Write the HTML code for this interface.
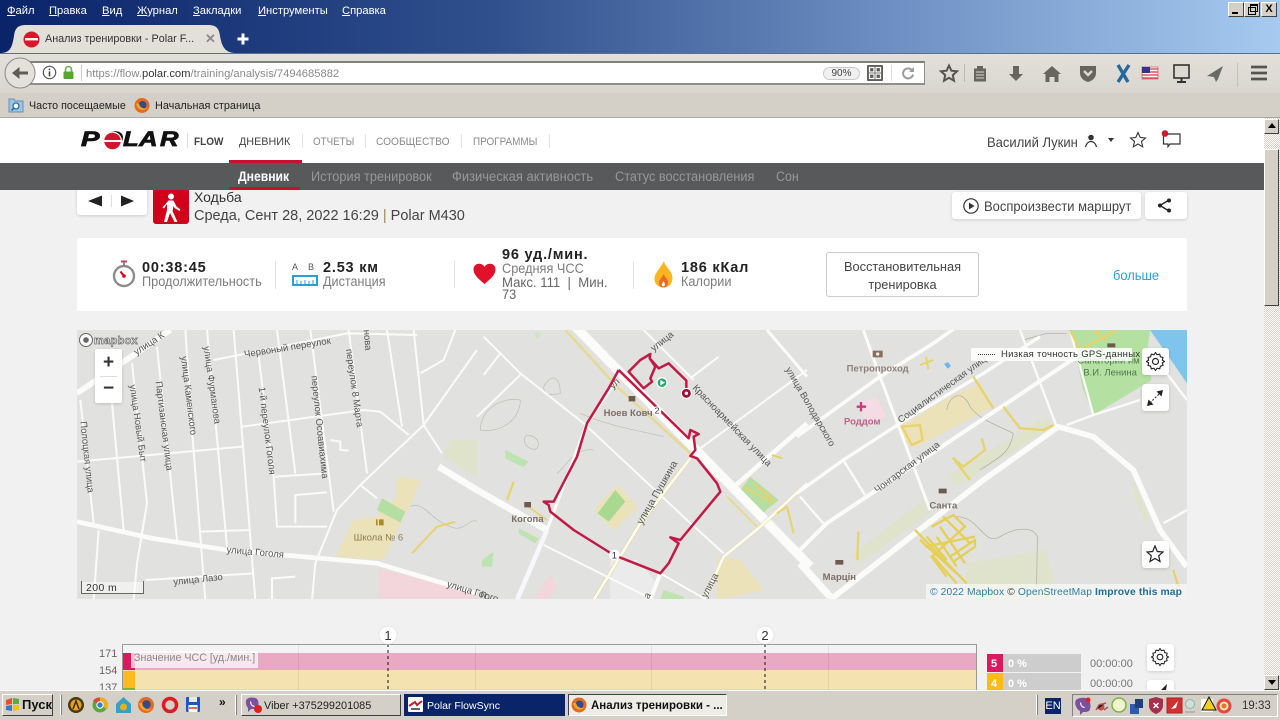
<!DOCTYPE html>
<html lang="ru"><head><meta charset="utf-8"><title>Анализ тренировки - Polar Flow</title>
<style>
html,body{margin:0;padding:0;width:1280px;height:720px;overflow:hidden;background:#f1f1f1;font-family:"Liberation Sans","DejaVu Sans",sans-serif}
.a{position:absolute;white-space:nowrap}
.box{position:absolute}
svg{position:absolute;overflow:hidden}
.card{position:absolute;background:#fff;box-shadow:0 1px 3px rgba(0,0,0,.15);border-radius:3px}
.menu{top:4px;font-size:11.2px;color:#fff;line-height:15px}
.menu u{text-decoration:underline}
.nav1{font-size:11px;color:#8a8a8a;top:136px;line-height:13px;transform-origin:0 0;transform:scaleX(.91)}
.nav2{font-size:13.5px;color:#96989a;top:168px;line-height:17px;transform-origin:0 0;transform:scaleX(.945)}
.lab{font-size:14px;color:#7d7d7d;line-height:14px;transform-origin:0 0;transform:scaleX(.91)}
.val{font-size:14.5px;font-weight:bold;color:#222;line-height:15px;letter-spacing:.8px}
.sep{position:absolute;width:1px;background:#e2e2e2}
.win{position:absolute;top:2px;width:14px;height:13px;background:#d4d0c8;border:1px solid;border-color:#fff #404040 #404040 #fff;box-sizing:content-box}
.sb{position:absolute;left:1264px;width:15px;background:#d4d0c8;border:1px solid;border-color:#fff #404040 #404040 #fff;box-sizing:border-box}
.tb{position:absolute;top:694px;height:22px;box-sizing:border-box;font-size:12px;line-height:20px;padding-top:1px;border:1px solid;white-space:nowrap;overflow:hidden}
.pl{position:absolute;top:127px;font:italic bold 21px/26px "Liberation Sans";color:#111;-webkit-text-stroke:.8px #111;transform-origin:0 50%;transform:scaleX(1.22)}
text{font-family:"Liberation Sans","DejaVu Sans",sans-serif}
</style></head><body>

<!-- Browser title bar -->
<div class="box" style="left:0;top:0;width:1280px;height:53px;background:linear-gradient(90deg,#0a246a 0%,#2f4f8c 38%,#6a8cc0 68%,#a6caf0 100%)"></div>
<div class="a menu" style="left:7px"><u>Ф</u>айл</div>
<div class="a menu" style="left:49px"><u>П</u>равка</div>
<div class="a menu" style="left:102px"><u>В</u>ид</div>
<div class="a menu" style="left:137px"><u>Ж</u>урнал</div>
<div class="a menu" style="left:193px"><u>З</u>акладки</div>
<div class="a menu" style="left:258px"><u>И</u>нструменты</div>
<div class="a menu" style="left:342px"><u>С</u>правка</div>
<div class="win" style="left:1228px"><div class="box" style="left:3px;top:9px;width:6px;height:2px;background:#000"></div></div>
<div class="win" style="left:1244px"><div class="box" style="left:3px;top:4px;width:6px;height:6px;border:1px solid #000"></div><div class="box" style="left:5px;top:1px;width:6px;height:5px;border:1px solid #000;border-top-width:2px"></div></div>
<div class="win" style="left:1261px;font:bold 11px/13px 'Liberation Sans';text-align:center">X</div>

<!-- Tab -->
<svg style="left:0;top:24px" width="240" height="30" viewBox="0 0 240 30"><path d="M0 29C10 29 12 24 14 12 15 4 18 1 26 1H208C216 1 219 4 220 12 222 24 226 29 236 29Z" fill="#e3e0d9"/></svg>
<svg style="left:23px;top:31px" width="17" height="17" viewBox="0 0 17 17"><circle cx="8.5" cy="8.5" r="8" fill="#d7182a"/><rect x="2" y="7" width="13" height="2.4" fill="#fff"/></svg>
<div class="a" style="left:45px;top:32px;font-size:10.8px;color:#333;line-height:15px">Анализ тренировки - Polar F...</div>
<div class="a" style="left:205px;top:31px;font:bold 13px/16px 'Liberation Sans';color:#8b8b8b">✕</div>
<svg style="left:236px;top:32px" width="14" height="14" viewBox="0 0 14 14"><path d="M7 1.500V12.500M1.500 7H12.500" stroke="#fff" stroke-width="3"/></svg>

<!-- Toolbar -->
<div class="box" style="left:0;top:53px;width:1280px;height:40px;background:linear-gradient(#e3e0d9,#d9d6cf);border-top:1px solid #5f6f8b;box-sizing:border-box"></div>
<div class="box" style="left:0;top:93px;width:1280px;height:25px;background:#d4d0c8;border-bottom:1px solid #a8a8a6;box-sizing:border-box"></div>
<div class="box" style="left:28px;top:61px;width:897px;height:24px;background:#fff;border:1px solid #8f8f8f;border-top:2px solid #7f7f7f;border-bottom:2px solid #8f8f8f;box-sizing:border-box"></div>
<svg style="left:4px;top:57px" width="32" height="32" viewBox="0 0 32 32"><circle cx="16" cy="16" r="15" fill="#e4e1da" stroke="#8a8a88"/><path d="M24 14.500H15.500V10L8 16 15.500 22V17.500H24Z" fill="#5c5c58"/></svg>
<svg style="left:42px;top:65px" width="15" height="15" viewBox="0 0 15 15"><circle cx="7.5" cy="7.5" r="6.2" fill="#fff" stroke="#555" stroke-width="1.2"/><rect x="6.7" y="6.4" width="1.6" height="5" fill="#444"/><rect x="6.7" y="3.6" width="1.6" height="1.6" fill="#444"/></svg>
<svg style="left:62px;top:65px" width="13" height="15" viewBox="0 0 13 15"><path d="M3.500 7V4.500a3 3 0 0 1 6 0V7" fill="none" stroke="#6ab04c" stroke-width="1.6"/><rect x="1.500" y="6.500" width="10" height="7.500" rx="1" fill="#58a532"/></svg>
<div class="box" style="left:81px;top:65px;width:1px;height:16px;background:#ccc"></div>
<div class="a" style="left:86px;top:67px;font-size:11.2px;line-height:14px;color:#8a8a8a">https://flow.<span style="color:#333">polar.com</span>/training/analysis/7494685882</div>
<div class="a" style="left:823px;top:67px;width:37px;height:13px;border:1px solid #c8c8c8;border-radius:7px;background:#f0f0f0;box-sizing:border-box;font-size:10px;line-height:11px;text-align:center;color:#444">90%</div>
<svg style="left:867px;top:65px" width="16" height="16" viewBox="0 0 16 16"><rect width="16" height="16" rx="1" fill="#5e5e5a"/><rect x="2.500" y="2.500" width="4.500" height="4.500" fill="none" stroke="#fff" stroke-width="1.2"/><rect x="9" y="2.500" width="4.500" height="4.500" fill="none" stroke="#fff" stroke-width="1.2"/><rect x="2.500" y="9" width="4.500" height="4.500" fill="none" stroke="#fff" stroke-width="1.2"/><rect x="9" y="9" width="4.500" height="4.500" fill="none" stroke="#fff" stroke-width="1.2"/></svg>
<div class="box" style="left:891px;top:65px;width:1px;height:16px;background:#ddd"></div>
<svg style="left:901px;top:66px" width="14" height="14" viewBox="0 0 14 14"><path d="M11.500 5A5 5 0 1 0 12 8.500" fill="none" stroke="#9b9b9b" stroke-width="2"/><path d="M13 1V6H8Z" fill="#9b9b9b"/></svg>

<svg style="left:0;top:53px" width="1280" height="40" viewBox="0 53 1280 40">
<path d="M949 65.500l2.400 5.200 5.600.6-4.200 3.800 1.200 5.600-5-2.900-5 2.900 1.200-5.600-4.200-3.800 5.600-.6Z" fill="#dcd9d2" stroke="#55554f" stroke-width="2"/>
<rect x="964" y="64" width="1" height="18" fill="#bdbab3"/>
<path d="M974 68.500h3v-2.500h6v2.500h3v13h-12Z" fill="#66665f"/><path d="M976 72h8M976 75h8M976 78h8" stroke="#dcd9d2" stroke-width="1"/>
<path d="M1013 66h6v8h4l-7 7-7-7h4Z" fill="#66665f"/>
<path d="M1052 66l-9 8h2.500v8h4v-5h5v5h4v-8h2.500Z" fill="#66665f"/>
<path d="M1080 66h16v7c0 5-4 8-8 9-4-1-8-4-8-9Z" fill="#66665f"/><path d="M1084 71l4 4 4-4" fill="none" stroke="#dcd9d2" stroke-width="2.400"/>
<path d="M1118 65l10 17M1129 65l-11 17" stroke="#23689f" stroke-width="3.400"/>
<rect x="1142" y="67" width="16" height="12" fill="#fff" stroke="#b88"/><path d="M1142 69h16M1142 72h16M1142 75h16M1142 78h16" stroke="#d34" stroke-width="1.200"/><rect x="1142" y="67" width="8" height="6" fill="#338"/>
<rect x="1174" y="65" width="15" height="13" fill="#dcd9d2" stroke="#333" stroke-width="1.600"/><path d="M1181.500 78v3M1177 82h9" stroke="#333" stroke-width="2"/>
<path d="M1223 66l-16 10 7 1 2 5 2-3Z" fill="#6a6a64"/>
<rect x="1237" y="63" width="1" height="24" fill="#c4c1ba"/>
<path d="M1251 67h16M1251 73h16M1251 79h16" stroke="#55554f" stroke-width="2.800"/>
</svg>

<!-- Bookmarks -->
<svg style="left:8px;top:97px" width="16" height="16" viewBox="0 0 16 16"><path d="M1 2h5l1 2h8v11H1Z" fill="#9cc4e4" stroke="#6a8fb0"/><circle cx="8" cy="9" r="3" fill="#fff" stroke="#2c6ea8" stroke-width="1.300"/><path d="M6 11l-2.500 2.500" stroke="#2c6ea8" stroke-width="1.600"/></svg>
<div class="a" style="left:29px;top:99px;font-size:10.7px;line-height:14px;color:#222">Часто посещаемые</div>
<svg style="left:134px;top:97px" width="16" height="17" viewBox="0 0 16 16"><circle cx="8" cy="8" r="7.500" fill="#e66a1f"/><circle cx="8.500" cy="7.500" r="4" fill="#2f4d8f"/><path d="M2 6C3 12 9 15 14 10 11 12 6 11 5 6Z" fill="#f8a526"/></svg>
<div class="a" style="left:155px;top:99px;font-size:10.9px;line-height:14px;color:#222">Начальная страница</div>

<!-- Polar header -->
<div class="box" style="left:0;top:118px;width:1264px;height:45px;background:#fff"></div>
<div class="pl" style="left:81px;transform:scaleX(1.32)">P</div>
<div class="pl" style="left:103px">O</div>
<div class="pl" style="left:123px">L</div>
<div class="pl" style="left:139px">A</div>
<div class="pl" style="left:160px">R</div>
<svg style="left:102px;top:131px" width="21" height="20" viewBox="0 0 21 20"><circle cx="10.500" cy="10" r="9.500" fill="#fff"/><circle cx="10.500" cy="10" r="8.300" fill="#d4142a"/><rect x="1" y="9" width="19" height="2" fill="#fff"/></svg>
<div class="box" style="left:187px;top:133px;width:1px;height:15px;background:#ddd"></div>
<div class="a" style="left:194px;top:136px;font-size:11px;font-weight:bold;color:#444;line-height:13px;transform-origin:0 0;transform:scaleX(.91)">FLOW</div>
<div class="a nav1" style="left:239px;color:#444;transform:scaleX(.98)">ДНЕВНИК</div>
<div class="a nav1" style="left:313px;transform:scaleX(.89)">ОТЧЕТЫ</div>
<div class="a nav1" style="left:376px;transform:scaleX(.925)">СООБЩЕСТВО</div>
<div class="a nav1" style="left:473px;transform:scaleX(.9)">ПРОГРАММЫ</div>
<div class="sep" style="left:302px;top:134px;height:14px"></div><div class="sep" style="left:365px;top:134px;height:14px"></div><div class="sep" style="left:461px;top:134px;height:14px"></div><div class="sep" style="left:549px;top:134px;height:14px"></div>
<div class="box" style="left:229px;top:160px;width:73px;height:3px;background:#c8102e"></div>
<div class="a" style="left:987px;top:135px;font-size:14px;color:#444;line-height:15px;transform-origin:0 0;transform:scaleX(.93)">Василий Лукин</div>
<svg style="left:1084px;top:134px" width="40" height="14" viewBox="0 0 40 14"><circle cx="7" cy="3.500" r="2.800" fill="#333"/><path d="M1.500 13C2.500 9 5 7.500 7 7.500S11.500 9 12.500 13" fill="none" stroke="#333" stroke-width="1.200"/><path d="M24 4h6l-3 4Z" fill="#333"/></svg>
<svg style="left:1129px;top:131px" width="18" height="17" viewBox="0 0 18 17"><path d="M9 1.500l2.200 5 5.300.5-4 3.500 1.200 5.300L9 13l-4.700 2.800 1.200-5.300-4-3.500 5.300-.5Z" fill="none" stroke="#333" stroke-width="1.100"/></svg>
<svg style="left:1160px;top:129px" width="22" height="20" viewBox="0 0 22 20"><path d="M3.500 5H20V15H10L8 17.500V15H3.500Z" fill="none" stroke="#333" stroke-width="1.200"/><circle cx="5" cy="4.500" r="3.300" fill="#d4142a"/></svg>

<!-- Activity header -->
<div class="card" style="left:77px;top:184px;width:70px;height:31px"></div>
<!-- Sub nav -->
<div class="box" style="left:0;top:163px;width:1264px;height:27px;background:#58595b"></div>
<div class="box" style="left:229px;top:187px;width:71px;height:3px;background:#c8102e"></div>
<div class="a nav2" style="left:238px;color:#fff;font-weight:bold;transform:scaleX(.9)">Дневник</div>
<div class="a nav2" style="left:311px">История тренировок</div>
<div class="a nav2" style="left:452px;transform:scaleX(.96)">Физическая активность</div>
<div class="a nav2" style="left:615px">Статус восстановления</div>
<div class="a nav2" style="left:776px;transform:scaleX(.92)">Сон</div>

<svg style="left:87px;top:194px" width="52" height="14" viewBox="0 0 52 14"><path d="M1 7L15 1.500V12.500Z" fill="#222"/><path d="M47 7L34 1.500V12.500Z" fill="#222"/><rect x="24" y="1" width="1" height="12" fill="#ddd"/></svg>
<svg style="left:153px;top:190px" width="36" height="34" viewBox="0 0 36 34"><path d="M0 0H36V31a3 3 0 0 1-3 3H3a3 3 0 0 1-3-3Z" fill="#d0021b"/><circle cx="18" cy="6.500" r="3" fill="#fff"/><path d="M15.500 10.500h5l3 6 4 3-1 1.500-5-3-1-2-1 5 5 11h-3l-4.500-9-3 9h-3l3-12V14l-3 4.500-1.500-1Z" fill="#fff"/></svg>
<div class="a" style="left:194px;top:190px;font-size:14px;line-height:15px;color:#333">Ходьба</div>
<div class="a" style="left:194px;top:208px;font-size:14.500px;line-height:16px;color:#444">Среда, Сент 28, 2022 16:29 <span style="color:#a08a50">|</span> Polar M430</div>
<div class="card" style="left:952px;top:192px;width:189px;height:27px"></div>
<div class="card" style="left:1145px;top:192px;width:42px;height:27px"></div>
<svg style="left:962px;top:197px" width="18" height="18" viewBox="0 0 18 18"><circle cx="9" cy="9" r="7.200" fill="none" stroke="#333" stroke-width="1.200"/><path d="M7 5.500L12.500 9 7 12.500Z" fill="#333"/></svg>
<div class="a" style="left:984px;top:199px;font-size:13.500px;line-height:16px;color:#444;transform-origin:0 0;transform:scaleX(.96)">Воспроизвести маршрут</div>
<svg style="left:1157px;top:198px" width="15" height="15" viewBox="0 0 15 15"><path d="M12 2L3 7.500 12 13" fill="none" stroke="#222" stroke-width="1.400"/><circle cx="12" cy="2.500" r="2" fill="#222"/><circle cx="3" cy="7.500" r="2" fill="#222"/><circle cx="12" cy="12.500" r="2" fill="#222"/></svg>

<!-- Stats -->
<div class="box" style="left:77px;top:238px;width:1110px;height:73px;background:#fff"></div>
<svg style="left:112px;top:260px" width="24" height="28" viewBox="0 0 24 28"><path d="M9 1.500h6" stroke="#d23c4e" stroke-width="2"/><path d="M12 2v3" stroke="#888" stroke-width="2"/><circle cx="12" cy="16" r="10" fill="#fff" stroke="#8c8c8c" stroke-width="2.400"/><path d="M12 16L8.500 11.500" stroke="#d0021b" stroke-width="2"/><circle cx="12" cy="16" r="1.800" fill="#d0021b"/></svg>
<div class="a val" style="left:142px;top:261px">00:38:45</div>
<div class="a lab" style="left:142px;top:274px">Продолжительность</div>
<div class="sep" style="left:275px;top:261px;height:28px"></div>
<div class="a" style="left:292px;top:262px;font-size:9px;line-height:11px;color:#555;word-spacing:8px">A B</div>
<svg style="left:292px;top:275px" width="26" height="12" viewBox="0 0 26 12"><rect width="26" height="11" fill="#2a9fd6"/><rect x="2" y="2" width="22" height="7" fill="#fff"/><path d="M5 5v4M9 6v3M13 5v4M17 6v3M21 5v4" stroke="#2a9fd6"/></svg>
<div class="a val" style="left:323px;top:261px">2.53 км</div>
<div class="a lab" style="left:323px;top:274px;transform:scaleX(.9)">Дистанция</div>
<div class="sep" style="left:454px;top:260px;height:28px"></div>
<svg style="left:473px;top:263px" width="23" height="22" viewBox="0 0 23 22"><path d="M11.500 21C5 15.500 .5 11.500 .5 6.500 .5 3 3 .8 6 .8 8.500 .8 10.500 2 11.500 4 12.500 2 14.500 .8 17 .8 20 .8 22.500 3 22.500 6.500 22.500 11.500 18 15.500 11.500 21Z" fill="#e0112b"/></svg>
<div class="a val" style="left:502px;top:248px">96 уд./мин.</div>
<div class="a lab" style="left:502px;top:262px;line-height:13px">Средняя ЧСС</div>
<div class="a lab" style="left:502px;top:276px;line-height:13px;color:#666;transform:scaleX(.94)">Макс. 111&nbsp; | &nbsp;Мин.</div>
<div class="a lab" style="left:502px;top:288px;line-height:13px;color:#666">73</div>
<div class="sep" style="left:633px;top:261px;height:28px"></div>
<svg style="left:654px;top:261px" width="19" height="27" viewBox="0 0 19 27"><path d="M10 0C11 6 19 10 18.500 18 18 23.500 14 26.500 9.500 26.500 4.500 26.500.5 23 .5 18 .5 12 6 8 10 0Z" fill="#fbb520"/><path d="M9.500 13C11 17 14.500 18 14 22 13.500 25 11.500 26.500 9.500 26.500 7 26.500 5 25 5 22 5 18.500 8 17 9.500 13Z" fill="#ea6a2a"/><path d="M9.500 20C10.500 22 11.500 23 10.500 25 9 26 7.500 25 7.800 23.500 8 22 9 21.500 9.500 20Z" fill="#fff"/></svg>
<div class="a val" style="left:681px;top:261px">186 кКал</div>
<div class="a lab" style="left:681px;top:274px">Калории</div>
<div class="box" style="left:826px;top:252px;width:153px;height:45px;border:1px solid #ccc;border-radius:3px;box-sizing:border-box;background:#fff"></div>
<div class="a" style="left:826px;top:258px;width:153px;font-size:12.800px;line-height:18px;color:#444;text-align:center;white-space:normal">Восстановительная<br>тренировка</div>
<div class="a" style="left:1113px;top:268px;font-size:14px;line-height:15px;color:#2a9fd6;transform-origin:0 0;transform:scaleX(.92)">больше</div>

<!-- Map -->
<svg style="left:77px;top:330px" width="1110" height="269" viewBox="77 330 1110 269">
<rect x="77" y="330" width="1110" height="269" fill="#e1e1df"/>
<!-- z5: left part -->
<g transform="translate(77 330) scale(.33333)" fill="none" stroke="#fbfbfa" stroke-width="6" stroke-linejoin="round">
<path d="M960 440L1030 450 1000 530 985 550 920 690 775 680 830 570 900 560 960 500Z" fill="#ebe2ba" stroke="none"/>
<path d="M915 505L985 545 970 578 900 540Z" fill="#b5dea3" stroke="none"/>
<path d="M905 715L1200 790V810H905Z" fill="#f3d5dc" stroke="none"/>
<path d="M1100 380L1200 440V330H1120Z" fill="#dfe3cc" stroke="none"/>
<path d="M1000 530C1040 510 1060 570 1120 590 1160 610 1180 560 1200 575" stroke="#bdbdb5" stroke-width="2"/>
<path d="M1005 670L1080 590 1135 575" stroke="#e8d26b" stroke-width="6"/>
<path d="M0 190L280 0" stroke-width="17"/>
<path d="M0 575L225 625 450 660 900 700 1200 790" stroke-width="14"/>
<path d="M410 90L810 10 1020 15"/><path d="M325 0L345 300 385 810"/><path d="M165 100L210 520 180 700 170 810"/><path d="M105 220L140 600"/><path d="M240 50L300 630"/><path d="M390 0L450 650"/><path d="M470 0L535 810"/><path d="M600 0L655 430"/><path d="M700 0L770 545"/><path d="M815 0L870 430"/><path d="M930 0L975 290"/><path d="M1010 0L1040 285 1095 370"/><path d="M0 395L495 350"/><path d="M495 290L860 240 910 245 995 315"/><path d="M545 80L590 440 600 590H750"/><path d="M595 440L750 430"/><path d="M655 580V495L750 487"/><path d="M760 330L790 335V360L815 362"/><path d="M1200 60L1040 285 850 465 780 540 715 700 705 810"/><path d="M850 465L900 505"/><path d="M370 605L520 600"/><path d="M65 600L50 810"/><path d="M205 750L530 730"/><path d="M585 810V745L655 740"/><path d="M10 210L50 580"/><path d="M1030 130L1100 90 1135 0"/>
<path d="M1085 410L1200 480" stroke-width="20"/>
<g stroke="none" fill="#555" font-size="28.500">
<text transform="translate(178 76) rotate(-33)">улица К</text>
<text transform="translate(503 82) rotate(-9)">Червоный переулок</text>
<text transform="translate(158 165) rotate(82)">улица Новый Быт</text>
<text transform="translate(236 155) rotate(83)">Партизанская улица</text>
<text transform="translate(312 80) rotate(83)">улица Каменского</text>
<text transform="translate(380 50) rotate(82)">улица Фурманова</text>
<text transform="translate(545 172) rotate(83)">1-й переулок Гоголя</text>
<text transform="translate(703 138) rotate(84)">переулок Осоавиахима</text>
<text transform="translate(807 58) rotate(82)">переулок 8 Марта</text>
<text transform="translate(860 0) rotate(85)">нова</text>
<text transform="translate(10 275) rotate(84)">Полоцкая улица</text>
<text transform="translate(448 668) rotate(5)">улица Гоголя</text>
<text transform="translate(290 765) rotate(-6)">улица Лазо</text>
<text transform="translate(1108 770) rotate(17)">улица Гог</text>
<text x="830" y="632" fill="#8a7c4d">Школа № 6</text>
</g>
<path d="M897 568h5v18h-5ZM906 568h14v18h-14Z" fill="#a98a2a" stroke="none"/>
</g>
<!-- z6: middle part -->
<g transform="translate(477 330) scale(.33333)" fill="none" stroke="#fbfbfa" stroke-width="6" stroke-linejoin="round">
<path d="M350 540L420 465 482 530 412 602Z" fill="#ebe2ba" stroke="none"/>
<path d="M362 550L415 480 445 515 395 575Z" fill="#a8d98f" stroke="none"/>
<path d="M85 360L155 395 140 412 85 385Z" fill="#bde3b0" stroke="none"/>
<path d="M125 595L185 625 175 640 125 610Z" fill="#bde3b0" stroke="none"/>
<path d="M15 690L50 665 45 710H15Z" fill="#bde3b0" stroke="none"/>
<path d="M170 5L195 10 180 30Z" fill="#cfe6c5" stroke="none"/>
<path d="M820 440L905 510 850 555 790 480Z" fill="#b5dea3" stroke="none"/>
<path d="M720 680L790 690 860 780 720 810Z" fill="#ebe2ba" stroke="none"/>
<path d="M560 780L620 800V810H550Z" fill="#bde3b0" stroke="none"/>
<path d="M170 810L220 730 240 770 210 810Z" fill="#f3d5dc" stroke="none"/>
<path d="M400 690H480L540 760 510 810H400Z" fill="#ecebec" stroke="none"/>
<path d="M10 300C10 240 70 200 130 210 130 270 70 310 10 300ZM150 315C190 320 190 350 175 358 150 360 130 330 150 315ZM200 170C230 120 250 150 250 190 210 200 200 190 200 170ZM310 250C400 290 480 300 560 320M350 360C290 350 260 420 240 430" stroke="#bdbdb5" stroke-width="2"/>
<path d="M265 0L420 170 640 370" stroke="#e8d98e" stroke-width="7"/>
<path d="M295 -10L1000 710" stroke-width="28"/>
<path d="M0 480L210 600" stroke-width="20"/>
<path d="M210 600L120 810" stroke-width="14" stroke="#f7f7fc"/>
<path d="M640 385L490 580 350 810" stroke="#e8d98e" stroke-width="12"/><path d="M640 385L490 580 350 810" stroke-width="8"/>
<path d="M420 150L330 280 210 600" stroke-width="9"/>
<path d="M20 20L130 130 320 280 630 570 740 670"/><path d="M70 70L20 135"/><path d="M130 135L0 260"/><path d="M670 355L990 120"/><path d="M760 480L990 280" stroke-width="14"/><path d="M870 0L990 140" stroke-width="9"/><path d="M500 0L650 150"/><path d="M640 145L725 80"/>
<path d="M990 460L850 590 740 680 680 810" stroke="#e8d98e" stroke-width="11"/><path d="M990 460L850 590 740 680 680 810" stroke-width="8"/>
<path d="M750 500L840 590" stroke="#e8d98e" stroke-width="6"/>
<path d="M200 645L530 810"/><path d="M550 730L520 810" stroke-width="12"/><path d="M550 730L690 810"/>
<path d="M110 455L90 510" stroke="#e8d26b" stroke-width="7"/><path d="M140 520L210 570" stroke="#e8d26b" stroke-width="5"/>
<path d="M800 470L890 520M830 460L890 510M885 375L915 385M900 550L930 530 950 610" stroke="#e8d26b" stroke-width="6"/>
<path d="M455 198h20v16h-20ZM142 516h20v16h-20Z" fill="#6e5a4e" stroke="none"/>
</g>
<!-- z7: right part -->
<g transform="translate(800 330) scale(.33333)" fill="none" stroke="#fbfbfa" stroke-width="7" stroke-linejoin="round">
<path d="M1050 0H1161V160L1120 100Z" fill="#7fc4ec" stroke="none"/>
<path d="M810 0H1050L1040 80 1055 150 880 255 850 180Z" fill="#b4e0a2" stroke="none"/>
<path d="M300 290L440 205 540 160 580 230 350 350 320 340Z" fill="#ebe2ba" stroke="none"/>
<path d="M170 220L230 200 260 260 200 280Z" fill="#f5dbe3" stroke="none"/>
<path d="M440 440L740 260 760 290 470 470ZM150 680L370 510 390 550 180 700Z" fill="#dfe3cc" stroke="none"/>
<path d="M1000 450L1050 570 1030 570 1000 490Z" fill="#dfe3cc" stroke="none"/>
<path d="M500 700L740 660 770 810H500Z" fill="#dfe3cc" stroke="none"/>
<path d="M440 240C450 190 490 180 510 230 540 270 580 280 640 310 630 370 600 380 540 420" stroke="#a9aca0" stroke-width="2"/>
<path d="M470 560C540 560 550 650 600 620 650 590 700 590 712 620L710 770M660 0L670 30 740 10H800" stroke="#a9aca0" stroke-width="2"/>
<path d="M-10 320L240 140 400 40 470 -10" stroke-width="11"/>
<path d="M-10 490L130 390 300 280 550 130 720 20" stroke-width="10"/>
<path d="M0 660L80 580 200 500 440 340 620 220 830 80" stroke-width="12"/>
<path d="M190 0L240 140 390 540" stroke-width="9"/>
<path d="M90 810L550 450 775 290 880 320 1000 420 1080 600 1160 710" stroke-width="17"/>
<path d="M130 390L195 495M0 500L70 580M770 290L660 0M880 255L810 0M800 285L880 255 1020 210M1100 130L1161 210M1090 580L1161 540"/>
<path d="M0 700L90 800" stroke-width="22"/>
<path d="M305 290L360 285 368 330 335 345 312 300ZM520 140L580 235M610 230L660 295 730 300 760 285M545 325L555 360 490 410 460 385 510 450M175 605L172 690M810 0L840 60 950 0M880 0L920 30M1120 720L1135 770" stroke="#e8d26b" stroke-width="7"/>
<path d="M345 600L500 760M395 590L460 555 495 590 395 680 440 740M375 650L525 620M420 590L495 700M410 620L470 710M450 680L525 630 525 650 460 695ZM400 680L470 760M380 620L440 690M430 560L510 640M360 630L470 730" stroke="#e6cf55" stroke-width="7"/>
<path d="M218 62h30v20h-30Z" fill="#8b6f5a" stroke="none"/><circle cx="233" cy="72" r="5" fill="#eee" stroke="none"/>
<path d="M416 476h24v14h-24ZM106 690h24v14h-24ZM922 40h24v12h-24Z" fill="#6e5a4e" stroke="none"/>
<path d="M183 216v28M170 230h28" stroke="#c93c7a" stroke-width="7"/>
<path d="M360 105L400 90M378 80L385 118" stroke="#e8d26b" stroke-width="6"/>
<path d="M432 102l12-6 9 12-10 8Z" fill="#6db7e8" stroke="none"/>
<g stroke="none" font-size="28.500" fill="#555">
<text transform="translate(302 280) rotate(-36)">Социалистическая улиц</text>
<text transform="translate(232 490) rotate(-37)">Чонгарская улица</text>
<text x="140" y="125" fill="#8e7f79" font-weight="bold">Петропроход</text>
<text x="132" y="283" fill="#c2608b" font-weight="bold">Роддом</text>
<text x="388" y="535" fill="#7d6e66" font-weight="bold">Санта</text>
<text x="68" y="750" fill="#7d6e66" font-weight="bold">Марцін</text>
<text x="832" y="100" fill="#4f7a4a">Санатории им</text>
<text x="850" y="137" fill="#4f7a4a">В.И. Ленина</text>
</g>
</g>
<!-- z6 labels + route on top -->
<g transform="translate(477 330) scale(.33333)" fill="none" stroke-linejoin="round">
<g stroke="none" fill="#555" font-size="28.500">
<text transform="translate(408 178) rotate(-45)">ул</text>
<text transform="translate(530 65) rotate(-38)">улица</text>
<text transform="translate(645 175) rotate(46)" font-size="29">Красноармейская улица</text>
<text transform="translate(495 585) rotate(-60)" font-size="30">улица Пушкина</text>
<text transform="translate(925 118) rotate(60)">улица Володарского</text>
<text transform="translate(688 805) rotate(-62)">улица</text>
<text transform="translate(515 808) rotate(-60)">а</text>
<text x="380" y="258" fill="#7d6e66" font-weight="bold">Ноев Ковч</text>
<text x="103" y="576" fill="#7d6e66" font-weight="bold">Когопа</text>
<text transform="translate(8 802) rotate(15)" fill="#555">Гого</text>
</g>
<g stroke="#c01a45" stroke-width="7.500">
<path d="M628 190L628 152 575 100 545 115 518 85 520 72 490 90 455 125 500 175 525 155 520 145 535 110 518 85"/>
<path d="M425 120L395 175 330 280 300 380 230 515 200 515 215 525 220 545 290 600 410 675 550 730 575 700 605 640 580 622 610 630 730 485 720 460 660 385 640 378 655 360 650 320 665 312 640 300 635 325 425 120"/>
</g>
<circle cx="555" cy="158" r="15" fill="#29ab6a" stroke="#fff" stroke-width="4"/><path d="M550 150L564 158 550 166Z" fill="#fff" stroke="none"/>
<circle cx="628" cy="190" r="15" fill="#a50e35" stroke="#fff" stroke-width="3"/><circle cx="628" cy="190" r="5" fill="#fff" stroke="none"/>
<circle cx="412" cy="675" r="16" fill="#fff" stroke="none"/><text x="412" y="685" font-size="28" text-anchor="middle" fill="#333" stroke="none">1</text>
<circle cx="540" cy="242" r="13" fill="#fff" stroke="none"/><text x="540" y="251" font-size="26" text-anchor="middle" fill="#333" stroke="none">2</text>
</g>
<!-- scale + logo + attr -->
<rect x="82" y="582" width="61" height="11" fill="#fff" fill-opacity=".5" stroke="none"/>
<path d="M81.500 581V593.500H143.500V581" fill="none" stroke="#666"/>
<text x="86" y="591" font-size="10.500" fill="#333" letter-spacing=".4">200 m</text>
<circle cx="86" cy="340" r="6.500" fill="#fff" fill-opacity=".8" stroke="#666"/><circle cx="86" cy="340" r="2.800" fill="#666"/>
<text x="94" y="344" font-size="11" font-weight="bold" fill="#fff" stroke="#666" stroke-width=".7" letter-spacing=".3">mapbox</text>
<rect x="926" y="584" width="261" height="15" fill="#fff" fill-opacity=".6"/>
<text x="930" y="595" font-size="10.300" letter-spacing=".11" fill="#2f7fa6">© 2022 Mapbox <tspan fill="#444">©</tspan> OpenStreetMap <tspan fill="#1d6f96" font-weight="bold">Improve this map</tspan></text>
<rect x="971" y="348" width="161" height="13" fill="#fff" fill-opacity=".85"/>
<path d="M978 354.500H996" stroke="#444" stroke-dasharray="1 1"/>
<text x="1001" y="357" font-size="9.500" letter-spacing=".3" fill="#333">Низкая точность GPS-данных</text>
</svg>
<div class="card" style="left:95px;top:349px;width:27px;height:54px;border-radius:2px"></div>
<div class="box" style="left:100px;top:376px;width:17px;height:1px;background:#ddd"></div>
<div class="a" style="left:95px;top:353px;width:27px;text-align:center;font:bold 19px/20px 'Liberation Sans';color:#333">+</div>
<div class="a" style="left:95px;top:379px;width:27px;text-align:center;font:bold 19px/20px 'Liberation Sans';color:#333">−</div>
<div class="card" style="left:1142px;top:348px;width:27px;height:27px"></div>
<svg style="left:1146px;top:352px" width="19" height="19" viewBox="0 0 19 19"><path d="M9.500 1.500l1.500 2.300 2.700-.6.700 2.600 2.600.7-.6 2.700 2.100 1.300-2.100 1.300.6 2.700-2.600.7-.7 2.600-2.700-.6-1.500 2.300-1.500-2.300-2.700.6-.7-2.600-2.600-.7.6-2.700L.5 10.500l2.100-1.300-.6-2.700 2.600-.7.7-2.600 2.700.6Z" transform="translate(0 -1)" fill="#fff" stroke="#222" stroke-width="1.100"/><circle cx="9.500" cy="9.500" r="3" fill="none" stroke="#222" stroke-width="1.200"/></svg>
<div class="card" style="left:1142px;top:384px;width:27px;height:27px"></div>
<svg style="left:1146px;top:389px" width="18" height="18" viewBox="0 0 18 18"><path d="M4 14L14 4" stroke="#222" stroke-dasharray="2 1.500"/><path d="M1 17L2.500 10.500 7.500 15.500ZM17 1L15.500 7.500 10.500 2.500Z" fill="#222"/></svg>
<div class="card" style="left:1142px;top:541px;width:27px;height:27px"></div>
<svg style="left:1146px;top:545px" width="18" height="18" viewBox="0 0 18 18"><path d="M9 1l2.300 5.500 5.700.5-4.300 3.800 1.300 5.700L9 13.500 4 16.500l1.300-5.700L1 7l5.700-.5Z" fill="#fff" stroke="#222" stroke-width="1.200"/></svg>

<!-- Chart -->
<div class="box" style="left:122px;top:644px;width:855px;height:46px;border:1px solid #999;border-bottom:0;box-sizing:border-box;background:#f3f3f3"></div>
<div class="box" style="left:123px;top:653px;width:853px;height:17px;background:#eaa9c2"></div>
<div class="box" style="left:123px;top:670px;width:853px;height:19px;background:#f4e3b1"></div>
<div class="box" style="left:123px;top:689px;width:853px;height:1px;background:#cfe2b8"></div>
<div class="box" style="left:123px;top:653px;width:12px;height:17px;background:#d91a5e"></div>
<div class="box" style="left:123px;top:671px;width:12px;height:18px;background:#fbbb1a"></div>
<div class="box" style="left:123px;top:688px;width:12px;height:2px;background:#7db53a"></div>
<div class="box" style="left:298px;top:645px;width:1px;height:45px;background:rgba(0,0,0,.07)"></div>
<div class="box" style="left:475px;top:645px;width:1px;height:45px;background:rgba(0,0,0,.07)"></div>
<div class="box" style="left:651px;top:645px;width:1px;height:45px;background:rgba(0,0,0,.07)"></div>
<div class="box" style="left:828px;top:645px;width:1px;height:45px;background:rgba(0,0,0,.07)"></div>
<div class="a" style="left:131px;top:651px;padding:0 3px;height:17px;background:rgba(255,255,255,.72);font-size:10.700px;line-height:15px;color:#8a8a8a">Значение ЧСС [уд./мин.]</div>
<div class="a" style="left:99px;top:648px;font-size:11px;line-height:13px;color:#666">171</div>
<div class="a" style="left:99px;top:665px;font-size:11px;line-height:13px;color:#666">154</div>
<div class="a" style="left:99px;top:682px;font-size:11px;line-height:13px;color:#666">137</div>
<svg style="left:375px;top:624px" width="400" height="66" viewBox="375 624 400 66"><path d="M388 644V690M765 644V690" stroke="#111" stroke-dasharray="3 3"/><circle cx="388" cy="635" r="9" fill="#fff" stroke="#e6e6e6"/><circle cx="765" cy="635" r="9" fill="#fff" stroke="#e6e6e6"/><text x="388" y="640" font-size="13" text-anchor="middle" fill="#333">1</text><text x="765" y="640" font-size="13" text-anchor="middle" fill="#333">2</text></svg>
<div class="box" style="left:987px;top:654px;width:16px;height:18px;background:#d91a5e"></div>
<div class="box" style="left:1003px;top:654px;width:78px;height:18px;background:#cdcdcd"></div>
<div class="box" style="left:987px;top:673px;width:16px;height:18px;background:#fbbb1a"></div>
<div class="box" style="left:1003px;top:673px;width:78px;height:18px;background:#cdcdcd"></div>
<div class="a" style="left:991px;top:657px;font-size:11px;font-weight:bold;line-height:14px;color:#fff">5</div>
<div class="a" style="left:1008px;top:657px;font-size:11px;font-weight:bold;line-height:14px;color:#fff">0 %</div>
<div class="a" style="left:991px;top:677px;font-size:11px;font-weight:bold;line-height:14px;color:#fff">4</div>
<div class="a" style="left:1008px;top:677px;font-size:11px;font-weight:bold;line-height:14px;color:#fff">0 %</div>
<div class="a" style="left:1090px;top:657px;font-size:11px;line-height:14px;color:#777">00:00:00</div>
<div class="a" style="left:1090px;top:677px;font-size:11px;line-height:14px;color:#777">00:00:00</div>
<div class="card" style="left:1147px;top:644px;width:27px;height:27px"></div>
<svg style="left:1151px;top:648px" width="18" height="18" viewBox="0 0 19 19"><path d="M9.500 1.500l1.500 2.300 2.700-.6.700 2.600 2.600.7-.6 2.700 2.100 1.300-2.100 1.300.6 2.700-2.600.7-.7 2.600-2.700-.6-1.500 2.300-1.500-2.300-2.700.6-.7-2.600-2.600-.7.6-2.700L.5 10.500l2.100-1.300-.6-2.700 2.600-.7.7-2.600 2.700.6Z" transform="translate(0 -1)" fill="#fff" stroke="#222" stroke-width="1.100"/><circle cx="9.500" cy="9.500" r="3" fill="none" stroke="#222" stroke-width="1.200"/></svg>
<div class="card" style="left:1147px;top:680px;width:27px;height:27px"></div>
<svg style="left:1160px;top:684px" width="8" height="6" viewBox="0 0 8 6"><path d="M7 0L6 6 1 6Z" fill="#222"/></svg>

<!-- Scrollbar -->
<div class="box" style="left:1264px;top:118px;width:16px;height:572px;background:repeating-conic-gradient(#d4d0c8 0 25%,#fff 0 50%) 0 0/2px 2px"></div>
<div class="sb" style="top:119px;height:15px"></div>
<svg style="left:1268px;top:123px" width="8" height="6" viewBox="0 0 8 6"><path d="M0 5H8L4 0Z" fill="#000"/></svg>
<div class="sb" style="top:149px;height:157px"></div>
<div class="sb" style="top:675px;height:15px"></div>
<svg style="left:1268px;top:680px" width="8" height="6" viewBox="0 0 8 6"><path d="M0 0H8L4 5Z" fill="#000"/></svg>

<!-- Taskbar -->
<div class="box" style="left:0;top:690px;width:1280px;height:30px;background:#d4d0c8;border-top:1px solid #fff;box-sizing:border-box;z-index:3"></div>
<div style="position:absolute;left:0;top:0;z-index:4;width:1280px;height:720px">
<div class="tb" style="left:2px;width:51px;background:#d4d0c8;border-color:#fff #404040 #404040 #fff;font-weight:bold;font-size:13px;padding-left:19px;padding-top:0;color:#111">Пуск</div>
<svg style="left:5px;top:697px" width="15" height="15" viewBox="0 0 15 15"><path d="M1 3L7 1V7L1 8Z" fill="#e8502a"/><path d="M8 1L14 2V7L8 7Z" fill="#5faa3a"/><path d="M1 9L7 8V14L1 13Z" fill="#3a78c8"/><path d="M8 8H14V13L8 14Z" fill="#f0c020"/></svg>
<div class="box" style="left:60px;top:695px;width:1px;height:20px;background:#fff;border-right:1px solid #808080"></div>
<svg style="left:68px;top:696px" width="135" height="18" viewBox="68 696 135 18">
<circle cx="76" cy="705" r="8" fill="#4a3a10"/><circle cx="76" cy="705" r="5.500" fill="#e8a020"/><path d="M73 709L76 701 79 709" fill="none" stroke="#3a2a08" stroke-width="1.500"/>
<circle cx="100" cy="705" r="7.500" fill="#5aa83c"/><path d="M100 697.500A7.500 7.500 0 0 1 107 709L100 705Z" fill="#e6b020"/><path d="M93 701A7.500 7.500 0 0 1 100 697.500L100 705Z" fill="#d84a3a"/><circle cx="100" cy="705" r="3.200" fill="#3b7cd8" stroke="#fff"/>
<path d="M116 704L123.500 697 131 704V713H116Z" fill="#35a0c8"/><circle cx="123.500" cy="707" r="3.500" fill="#e6b020"/>
<circle cx="146" cy="705" r="8" fill="#e66a1f"/><circle cx="146.500" cy="704.500" r="4.200" fill="#2f4d8f"/><path d="M139 703C140 710 147 713 152 709 148 710 143 709 142 703Z" fill="#f8a526"/>
<circle cx="170" cy="705" r="6.500" fill="none" stroke="#e01a22" stroke-width="3.500"/>
<rect x="186" y="697" width="14" height="15" rx="1" fill="#1f55c8"/><rect x="189" y="697" width="8" height="5" fill="#e8e8f0"/><rect x="188.500" y="705" width="9" height="7" fill="#fff"/><path d="M189 708h8" stroke="#d33" stroke-width="1.500"/>
</svg>
<div class="a" style="left:219px;top:694px;font:bold 12px/16px 'Liberation Sans';color:#111">»</div>
<div class="box" style="left:235px;top:695px;width:1px;height:20px;background:#fff;border-right:1px solid #808080"></div>
<div class="tb" style="left:241px;width:160px;background:#d4d0c8;border-color:#fff #404040 #404040 #fff;padding-left:22px;color:#222;font-size:10.900px">Viber +375299201085</div>
<svg style="left:245px;top:696px" width="17" height="18" viewBox="0 0 17 18"><path d="M2 3C4 1 10 1 12 3 14 5 14 10 12 12 10 13 8 13 6 13L3 16V12C1 10 0 5 2 3Z" fill="#7b519d"/><path d="M5 5C5 9 7 11 10 11L9 9.500 8 9.500C7 9 6.500 8 6.500 7.500V6.500Z" fill="#fff"/><circle cx="13" cy="13" r="4" fill="#e02020"/></svg>
<div class="tb" style="left:404px;width:161px;background:#0a246a;border-color:#0a246a;padding-left:22px;color:#fff;font-size:10.500px">Polar FlowSync</div>
<svg style="left:408px;top:697px" width="15" height="15" viewBox="0 0 15 15"><rect width="15" height="15" rx="1" fill="#fff"/><path d="M1 9L7 5 9 8 14 4" stroke="#c02030" stroke-width="2" fill="none"/><path d="M3 12h9" stroke="#333" stroke-width="1.500"/></svg>
<div class="tb" style="left:568px;width:159px;background:#eeece7;border-color:#404040 #fff #fff #404040;padding-left:22px;color:#111;font-weight:bold;font-size:11.500px">Анализ тренировки - ...</div>
<svg style="left:571px;top:697px" width="16" height="16" viewBox="0 0 16 16"><circle cx="8" cy="8" r="7.500" fill="#e66a1f"/><circle cx="8.500" cy="7.500" r="4" fill="#2f4d8f"/><path d="M2 6C3 12 9 15 14 10 11 12 6 11 5 6Z" fill="#f8a526"/></svg>
<div class="box" style="left:1036px;top:695px;width:1px;height:20px;background:#fff;border-right:1px solid #808080"></div>
<div class="a" style="left:1045px;top:698px;width:16px;height:16px;background:#0a246a;color:#fff;font-size:11px;line-height:16px;text-align:center">EN</div>
<div class="box" style="left:1072px;top:694px;width:206px;height:23px;border:1px solid;border-color:#808080 #fff #fff #808080;box-sizing:border-box"></div>
<svg style="left:1074px;top:696px" width="160" height="20" viewBox="1074 696 160 20">
<path d="M1076 700C1079 697 1087 697 1089 700 1091 703 1091 709 1089 711 1087 712 1085 712 1083 712L1080 715V711C1076 709 1074 703 1076 700Z" fill="#7b519d"/><path d="M1080 702C1080 706 1082 708 1085 708L1084 706.500 1083 706.500C1082 706 1081.500 705 1081.500 704.500V703.500Z" fill="#fff"/><circle cx="1088" cy="700" r="2.500" fill="#e02020"/>
<circle cx="1101" cy="707" r="3.500" fill="#c84b4b"/><path d="M1096 710L1099 705 1106 703M1104 710L1108 707" stroke="#a55" stroke-width="1.500"/>
<circle cx="1119" cy="705" r="7" fill="#f4f3d0" stroke="#7ab648" stroke-width="1.500"/>
<rect x="1130" y="704" width="9" height="10" fill="#2c5fa8"/><rect x="1135" y="699" width="8" height="9" fill="#1f4178"/>
<path d="M1149 699L1156 697 1163 699V706C1163 710 1159 713 1156 714 1153 713 1149 710 1149 706Z" fill="#a82f4a"/><path d="M1153.500 703l5 5m0-5l-5 5" stroke="#fff" stroke-width="1.500"/>
<rect x="1167" y="698" width="15" height="15" fill="#d03030" stroke="#a22"/><path d="M1171 709L1178 701 1176 708Z" fill="#fff"/>
<circle cx="1190" cy="704" r="4.500" fill="#cfe0d8" stroke="#93b3a8"/><path d="M1185 712h10" stroke="#aaa" stroke-width="1.500"/>
<rect x="1201" y="699" width="12" height="13" fill="#fff"/><path d="M1209 697L1216 710H1202Z" fill="#f0d020" stroke="#111"/>
<circle cx="1224" cy="706" r="7.500" fill="#e24a3c"/><circle cx="1224" cy="706" r="4.500" fill="#fbe0c8"/><circle cx="1224" cy="706" r="2.500" fill="#e07a20"/>
</svg>
<div class="a" style="left:1242px;top:700px;font-size:11.500px;line-height:13px;color:#333">19:33</div>
</div>
</body></html>
